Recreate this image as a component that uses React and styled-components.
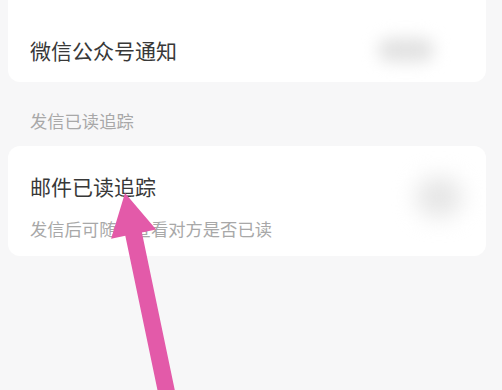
import React from 'react'
import styled, { createGlobalStyle } from 'styled-components'

const Global = createGlobalStyle`
  html, body {
    margin: 0;
    padding: 0;
    background: #f7f7f8;
    font-family: "Noto Sans CJK SC", "Noto Sans", sans-serif;
  }
`

export default function App() {
  return (
    <Page>
      <Global />
      <TopCard>
        <Row>
          <Title>微信公众号通知</Title>
          <Switch />
        </Row>
      </TopCard>
      <SectionLabel>发信已读追踪</SectionLabel>
      <Card>
        <Row>
          <TextCol>
            <Title>邮件已读追踪</Title>
            <Sub>发信后可随时查看对方是否已读</Sub>
          </TextCol>
          <Switch soft />
        </Row>
      </Card>
      <Arrow viewBox="0 0 502 390" width="502" height="390">
        <polygon
          points="125,193 156.1,229.4 141.9,232.4 176.5,398.3 159.9,401.7 125.3,235.8 111.1,238.8"
          fill="#e35aa9"
        />
      </Arrow>
    </Page>
  )
}

const Page = styled.div`
  position: relative;
  width: 502px;
  height: 390px;
  overflow: hidden;
  padding: 0 16px 0 8px;
  box-sizing: border-box;
`

const TopCard = styled.div`
  background: #fff;
  border-radius: 0 0 12px 12px;
  padding: 18px 22px 0;
  height: 82px;
  box-sizing: border-box;
`

const Card = styled.div`
  background: #fff;
  border-radius: 12px;
  padding: 22px 22px 19px;
  height: 110px;
  box-sizing: border-box;
`

const Row = styled.div`
  display: flex;
  align-items: center;
  justify-content: space-between;
  height: 100%;
  max-height: 64px;
`

const TextCol = styled.div`
  display: flex;
  flex-direction: column;
  gap: 17px;
  margin-top: 12px;
`

const Title = styled.div`
  font-size: 21px;
  line-height: 28px;
  color: #383838;
`

const Sub = styled.div`
  font-size: 17.3px;
  line-height: 24px;
  color: #a8a8a8;
`

const SectionLabel = styled.div`
  font-size: 17.3px;
  line-height: 24px;
  color: #a8a8a8;
  padding: 27px 22px 0;
  margin-bottom: 13px;
`

const Switch = styled.div`
  width: ${p => (p.soft ? '46px' : '56px')};
  height: ${p => (p.soft ? '40px' : '24px')};
  border-radius: 20px;
  background: ${p => (p.soft ? '#e6e6e6' : '#e2e2e2')};
  filter: blur(${p => (p.soft ? '11px' : '8px')});
  margin-right: ${p => (p.soft ? '2px' : '30px')};
  margin-top: ${p => (p.soft ? '-6px' : '0')};
  flex-shrink: 0;
`

const Arrow = styled.svg`
  position: absolute;
  left: 0;
  top: 0;
  pointer-events: none;
`
